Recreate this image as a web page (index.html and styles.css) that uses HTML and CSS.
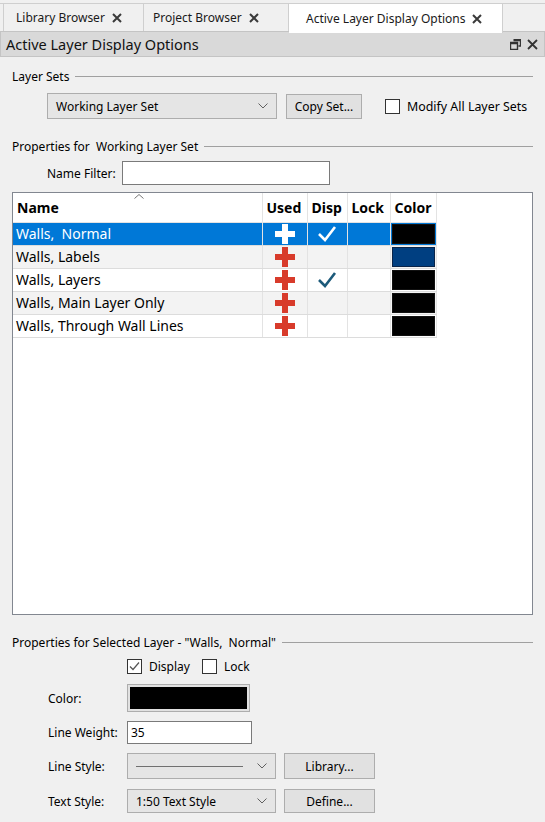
FILE: index.html
```html
<!doctype html>
<html lang="en">
<head>
    <meta charset="UTF-8">
    <title>Active Layer Display Options</title>
    <link rel="stylesheet" href="styles.css">
</head>
<body>
    <div class="tabs">
        <div class="tab tab-library">Library Browser
            <svg class="tab-x" width="10" height="10" viewBox="0 0 10 10"><path d="M1 1L9 9M9 1L1 9" stroke="#3a3a3a" stroke-width="2"/></svg>
        </div>
        <div class="tab tab-project">Project Browser
            <svg class="tab-x" width="10" height="10" viewBox="0 0 10 10"><path d="M1 1L9 9M9 1L1 9" stroke="#3a3a3a" stroke-width="2"/></svg>
        </div>
        <div class="tab tab-active">Active Layer Display Options
            <svg class="tab-x" width="10" height="10" viewBox="0 0 10 10"><path d="M1 1L9 9M9 1L1 9" stroke="#3a3a3a" stroke-width="2"/></svg>
        </div>
    </div>

    <div class="panel-head">
        <span class="panel-title">Active Layer Display Options</span>
        <span class="panel-icons">
            <svg width="11" height="11" viewBox="0 0 11 11"><path d="M3.5 0.5h7v6.5h-2M0.5 3.5h7v7h-7z M0.5 4.5h7M3.5 1.5h7" fill="none" stroke="#333" stroke-width="1.4"/></svg>
            <svg width="11" height="11" viewBox="0 0 11 11"><path d="M1 1L10 10M10 1L1 10" stroke="#333" stroke-width="1.8"/></svg>
        </span>
    </div>

    <div class="content">
        <div class="group-title"><span>Layer Sets</span><i class="rule"></i></div>
        <div class="row row-sets">
            <div class="combo combo-sets">
                <span>Working Layer Set</span>
                <svg class="chev" width="10" height="6" viewBox="0 0 10 6"><path d="M0.5 0.5L5 5L9.5 0.5" fill="none" stroke="#606060"/></svg>
            </div>
            <div class="btn btn-copy">Copy Set...</div>
            <span class="check check-modify"></span>
            <span class="check-label label-modify">Modify All Layer Sets</span>
        </div>

        <div class="group-title group-props"><span>Properties for&nbsp; Working Layer Set</span><i class="rule"></i></div>
        <div class="row row-filter">
            <span class="filter-label">Name Filter:</span>
            <div class="input input-filter"></div>
        </div>

        <div class="grid">
            <table class="layers">
                <thead>
                    <tr>
                        <th class="col-name">Name
                            <svg class="sort" width="10" height="5" viewBox="0 0 10 5"><path d="M0.5 4.5L5 0.5L9.5 4.5" fill="none" stroke="#777"/></svg>
                        </th>
                        <th class="col-used">Used</th>
                        <th class="col-disp">Disp</th>
                        <th class="col-lock">Lock</th>
                        <th class="col-color">Color</th>
                    </tr>
                </thead>
                <tbody>
                    <tr class="selected">
                        <td>Walls,&nbsp; Normal</td>
                        <td class="icon"><svg width="20" height="20" viewBox="0 0 20 20"><path d="M7 0h6v7h7v6h-7v7h-6v-7h-7v-6h7z" fill="#fff"/></svg></td>
                        <td class="icon"><svg width="20" height="18" viewBox="0 0 20 18"><path d="M2 9L8 15L18 2" fill="none" stroke="#fff" stroke-width="2.6"/></svg></td>
                        <td></td>
                        <td class="swatch-cell"><div class="swatch"></div></td>
                    </tr>
                    <tr class="alt">
                        <td>Walls, Labels</td>
                        <td class="icon"><svg width="20" height="20" viewBox="0 0 20 20"><path d="M7 0h6v7h7v6h-7v7h-6v-7h-7v-6h7z" fill="#d83b2b"/></svg></td>
                        <td></td>
                        <td></td>
                        <td class="swatch-cell"><div class="swatch swatch-blue"></div></td>
                    </tr>
                    <tr>
                        <td>Walls, Layers</td>
                        <td class="icon"><svg width="20" height="20" viewBox="0 0 20 20"><path d="M7 0h6v7h7v6h-7v7h-6v-7h-7v-6h7z" fill="#d83b2b"/></svg></td>
                        <td class="icon"><svg width="20" height="18" viewBox="0 0 20 18"><path d="M2 9L8 15L18 2" fill="none" stroke="#1c5a7a" stroke-width="2.6"/></svg></td>
                        <td></td>
                        <td class="swatch-cell"><div class="swatch"></div></td>
                    </tr>
                    <tr class="alt">
                        <td>Walls, Main Layer Only</td>
                        <td class="icon"><svg width="20" height="20" viewBox="0 0 20 20"><path d="M7 0h6v7h7v6h-7v7h-6v-7h-7v-6h7z" fill="#d83b2b"/></svg></td>
                        <td></td>
                        <td></td>
                        <td class="swatch-cell"><div class="swatch"></div></td>
                    </tr>
                    <tr>
                        <td>Walls, Through Wall Lines</td>
                        <td class="icon"><svg width="20" height="20" viewBox="0 0 20 20"><path d="M7 0h6v7h7v6h-7v7h-6v-7h-7v-6h7z" fill="#d83b2b"/></svg></td>
                        <td></td>
                        <td></td>
                        <td class="swatch-cell"><div class="swatch"></div></td>
                    </tr>
                </tbody>
            </table>
        </div>

        <div class="group-title group-selected"><span>Properties for Selected Layer - "Walls,&nbsp; Normal"</span><i class="rule"></i></div>

        <div class="form">
            <div class="row row-checks">
                <span class="label"></span>
                <span class="check checked">
                    <svg width="13" height="13" viewBox="0 0 13 13"><path d="M2 6.5L5 9.5L11 2.5" fill="none" stroke="#555" stroke-width="1.2"/></svg>
                </span>
                <span class="check-label">Display</span>
                <span class="check check-lock"></span>
                <span class="check-label">Lock</span>
            </div>
            <div class="row row-color">
                <span class="label">Color:</span>
                <div class="color-btn"><div class="color-fill"></div></div>
            </div>
            <div class="row row-weight">
                <span class="label">Line Weight:</span>
                <div class="input input-weight">35</div>
            </div>
            <div class="row row-style">
                <span class="label">Line Style:</span>
                <div class="combo combo-small">
                    <i class="line-sample"></i>
                    <svg class="chev" width="10" height="6" viewBox="0 0 10 6"><path d="M0.5 0.5L5 5L9.5 0.5" fill="none" stroke="#606060"/></svg>
                </div>
                <div class="btn btn-side">Library...</div>
            </div>
            <div class="row row-text">
                <span class="label">Text Style:</span>
                <div class="combo combo-small">
                    <span>1:50 Text Style</span>
                    <svg class="chev" width="10" height="6" viewBox="0 0 10 6"><path d="M0.5 0.5L5 5L9.5 0.5" fill="none" stroke="#606060"/></svg>
                </div>
                <div class="btn btn-side">Define...</div>
            </div>
        </div>
    </div>
</body>
</html>
```

FILE: styles.css
```css
* {
    margin: 0;
    padding: 0;
    box-sizing: border-box;
}
body {
    background-color: #f0f0f0;
    font-family: "Noto Sans", "Open Sans", sans-serif;
    font-size: 12px;
    color: #000;
    width: 545px;
    height: 822px;
    overflow: hidden;
}

/* tab strip */
.tabs {
    display: flex;
    height: 28px;
    margin-top: 3px;
    border-top: 1px solid #cfcfcf;
}
.tab {
    display: flex;
    align-items: center;
    height: 100%;
    border-right: 1px solid #cfcfcf;
    font-size: 12px;
    color: #1a1a1a;
}
.tab-x {
    margin-left: 7px;
}
.tab-library {
    margin-left: 3px;
    border-left: 1px solid #cfcfcf;
    width: 141px;
    padding-left: 12px;
}
.tab-project {
    width: 145px;
    padding-left: 9px;
}
.tab-active {
    width: 214px;
    padding-left: 17px;
    background-color: #fff;
    height: 29px;
}

/* panel header */
.panel-head {
    display: flex;
    align-items: center;
    justify-content: space-between;
    height: 26px;
    background-color: #d9d9d9;
    border: 1px solid #c4c4c4;
    padding: 0 6px 0 5px;
}
.panel-title {
    font-size: 14.5px;
    color: #111;
}
.panel-icons {
    display: flex;
    gap: 6px;
    align-items: center;
}

.content {
    padding: 10px 12px 0 12px;
}
.group-title {
    display: flex;
    align-items: center;
    height: 18px;
    gap: 6px;
}
.group-title span {
    white-space: nowrap;
}
.rule {
    flex: 1;
    border-top: 1px solid #a0a0a0;
}
.row {
    display: flex;
    align-items: center;
}

.row-sets {
    margin-top: 8px;
    padding-left: 35px;
    height: 26px;
}
.combo {
    display: flex;
    align-items: center;
    justify-content: space-between;
    background-color: #e5e5e5;
    border: 1px solid #adadad;
    padding: 0 8px 0 8px;
    height: 100%;
}
.combo-sets {
    width: 230px;
}
.chev {
    flex-shrink: 0;
}
.btn {
    display: flex;
    align-items: center;
    justify-content: center;
    background-color: #e1e1e1;
    border: 1px solid #adadad;
    height: 100%;
}
.btn-copy {
    width: 76px;
    margin-left: 9px;
    height: 25px;
}
.check {
    display: inline-flex;
    align-items: center;
    justify-content: center;
    width: 15px;
    height: 15px;
    border: 1px solid #333;
    background-color: #fff;
}
.check-modify {
    margin-left: 23px;
}
.check-label {
    margin-left: 7px;
}
.label-modify {
    font-size: 12.4px;
}

.group-props {
    margin-top: 18px;
}
.row-filter {
    margin-top: 6px;
    height: 24px;
    padding-left: 35px;
}
.filter-label {
    width: 75px;
}
.input {
    background-color: #fff;
    border: 1px solid #7a7a7a;
    height: 100%;
    padding-left: 3px;
    display: flex;
    align-items: center;
}
.input-filter {
    width: 208px;
}

/* layer grid */
.grid {
    margin-top: 7px;
    height: 423px;
    background-color: #fff;
    border: 1px solid #828790;
}
.layers {
    border-collapse: collapse;
    font-size: 14px;
}
.layers th {
    height: 29px;
    font-weight: bold;
    text-align: left;
    padding: 0 4px;
    border-right: 1px solid #e3e3e3;
    border-bottom: 1px solid #e3e3e3;
    position: relative;
}
.layers td {
    height: 23px;
    padding: 0 3px;
    border-right: 1px solid #e3e3e3;
    border-bottom: 1px solid #dcdcdc;
    white-space: nowrap;
    line-height: 20px;
}
.col-name {
    width: 249px;
}
.col-used {
    width: 45px;
}
.col-disp {
    width: 40px;
}
.col-lock {
    width: 43px;
}
.col-color {
    width: 46px;
}
.sort {
    position: absolute;
    left: 121px;
    top: 1px;
}
.layers td.icon {
    text-align: center;
    padding: 0;
    line-height: 0;
}
.layers tr.alt td {
    background-color: #f3f3f3;
}
.layers tr.selected td {
    background-color: #0078d7;
    color: #fff;
}
.layers td.swatch-cell {
    padding: 1px;
    line-height: 0;
}
.swatch {
    height: 20px;
    background-color: #000;
    border: 1px solid #111;
}
.swatch-blue {
    background-color: #003f81;
    border-color: #0a2448;
}

.group-selected {
    margin-top: 18px;
}
.form {
    padding-left: 36px;
}
.label {
    width: 79px;
    flex-shrink: 0;
}
.row-checks {
    margin-top: 7px;
    height: 16px;
}
.check-lock {
    margin-left: 12px;
}
.row-color {
    margin-top: 10px;
    height: 28px;
}
.color-btn {
    width: 123px;
    height: 100%;
    border: 1px solid #adadad;
    background-color: #e1e1e1;
    padding: 2px;
}
.color-fill {
    height: 100%;
    background-color: #000;
}
.row-weight {
    margin-top: 9px;
    height: 23px;
}
.input-weight {
    width: 125px;
}
.row-style {
    margin-top: 9px;
    height: 26px;
}
.row-text {
    margin-top: 10px;
    height: 24px;
}
.combo-small {
    width: 149px;
}
.line-sample {
    width: 107px;
    border-top: 1px solid #707070;
}
.btn-side {
    width: 91px;
    margin-left: 8px;
}
```
